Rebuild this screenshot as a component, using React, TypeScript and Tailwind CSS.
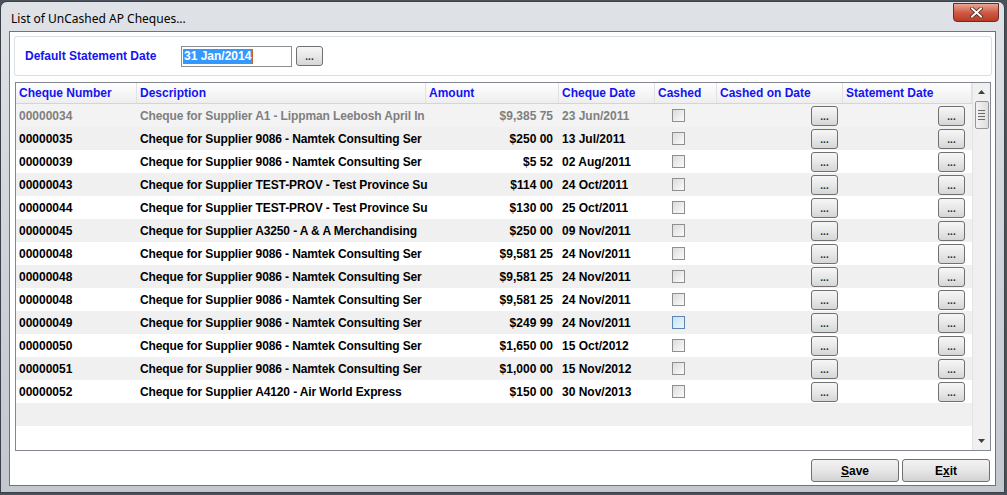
import React from "react";

type Row = {
  no: string;
  desc: string;
  amount: string;
  date: string;
  dim?: boolean;
  hover?: boolean;
};

const NAMTEK = "Cheque for Supplier 9086 - Namtek Consulting Ser";
const TESTPROV = "Cheque for Supplier TEST-PROV - Test Province Su";

const rows: Row[] = [
  { no: "00000034", desc: "Cheque for Supplier A1 - Lippman Leebosh April In", amount: "$9,385 75", date: "23 Jun/2011", dim: true },
  { no: "00000035", desc: NAMTEK, amount: "$250 00", date: "13 Jul/2011" },
  { no: "00000039", desc: NAMTEK, amount: "$5 52", date: "02 Aug/2011" },
  { no: "00000043", desc: TESTPROV, amount: "$114 00", date: "24 Oct/2011" },
  { no: "00000044", desc: TESTPROV, amount: "$130 00", date: "25 Oct/2011" },
  { no: "00000045", desc: "Cheque for Supplier A3250 - A & A Merchandising", amount: "$250 00", date: "09 Nov/2011" },
  { no: "00000048", desc: NAMTEK, amount: "$9,581 25", date: "24 Nov/2011" },
  { no: "00000048", desc: NAMTEK, amount: "$9,581 25", date: "24 Nov/2011" },
  { no: "00000048", desc: NAMTEK, amount: "$9,581 25", date: "24 Nov/2011" },
  { no: "00000049", desc: NAMTEK, amount: "$249 99", date: "24 Nov/2011", hover: true },
  { no: "00000050", desc: NAMTEK, amount: "$1,650 00", date: "15 Oct/2012" },
  { no: "00000051", desc: NAMTEK, amount: "$1,000 00", date: "15 Nov/2012" },
  { no: "00000052", desc: "Cheque for Supplier A4120 - Air World Express", amount: "$150 00", date: "30 Nov/2013" },
];

const font = { fontFamily: '"Liberation Sans", Arial, sans-serif' };

function DotsButton() {
  return (
    <div className="w-[27px] h-[20px] rounded-[3px] border border-[#707070] bg-gradient-to-b from-[#f6f6f6] via-[#e8e8e8] to-[#d6d6d6] flex items-end justify-center pb-[3px] text-[10px] leading-none font-bold text-[#1c2a40]">
      ...
    </div>
  );
}

function CheckBox({ hover }: { hover?: boolean }) {
  return hover ? (
    <div className="w-[13px] h-[13px] border border-[#5c86ad] bg-gradient-to-br from-[#c6e2f3] to-[#eaf6fd]" />
  ) : (
    <div className="w-[13px] h-[13px] border border-[#8e8f8f] bg-gradient-to-br from-[#dcdcdc] to-[#fbfbfb]" />
  );
}

const headers = [
  { label: "Cheque Number", w: "w-[121px]" },
  { label: "Description", w: "w-[289px]" },
  { label: "Amount", w: "w-[133px]" },
  { label: "Cheque Date", w: "w-[96px]" },
  { label: "Cashed", w: "w-[62px]" },
  { label: "Cashed on Date", w: "w-[126px]" },
  { label: "Statement Date", w: "w-[129px]" },
];

export default function App() {
  return (
    <div className="w-[1007px] h-[495px] bg-[#4b5158] overflow-hidden" style={font}>
      <div className="w-[1005px] h-[492px] mt-[1px] rounded-t-[7px] border border-[#3c4148] bg-gradient-to-b from-[#dfe3e8] via-[#cfd4da] to-[#c3c8ce] flex flex-col px-[8px] pb-[6px]">
        {/* title bar */}
        <div className="h-[29px] flex items-start justify-between">
          <div
            className="pt-[8px] pl-[2px] text-[12px] text-black"
            style={{ fontFamily: '"Noto Sans", "DejaVu Sans", sans-serif' }}
          >
            List of UnCashed AP Cheques...
          </div>
          <div className="mt-[1px] mr-[-3px] w-[46px] h-[19px] rounded-b-[4px] border border-[#6b2a22] bg-gradient-to-b from-[#e8a593] via-[#cf5a45] to-[#b93a26] flex items-center justify-center">
            <svg width="13" height="11" viewBox="0 0 13 11">
              <path d="M2 1.5 L11 9.5 M11 1.5 L2 9.5" stroke="#3a1a14" strokeWidth="3.4" strokeLinecap="square" />
              <path d="M2 1.5 L11 9.5 M11 1.5 L2 9.5" stroke="#ffffff" strokeWidth="2" strokeLinecap="square" />
            </svg>
          </div>
        </div>

        {/* client area */}
        <div className="flex-1 bg-white border border-[#6f747a] flex flex-col">
          {/* group box */}
          <div className="mt-[4px] ml-[4px] mr-[3px] h-[40px] rounded-[3px] border border-[#d5dfe5] flex items-center pl-[10px]">
            <div className="w-[156px] text-[12px] font-bold text-[#1414f0]">Default Statement Date</div>
            <div className="w-[111px] h-[21px] border border-[#8a8d92] flex items-center pl-[1px]">
              <span className="bg-[#3399ff] text-white text-[12px] font-bold px-[1px] leading-[15px]">31 Jan/2014</span>
              <span className="w-[1px] h-[15px] bg-[#c4662a]" />
            </div>
            <div className="ml-[4px]">
              <DotsButton />
            </div>
          </div>

          {/* grid */}
          <div className="mt-[6px] ml-[5px] mr-[4px] h-[369px] border border-[#828790] flex">
            <div className="w-[956px] flex flex-col">
              <div className="h-[21px] flex bg-gradient-to-b from-white to-[#eeeeee] border-b border-[#d5d5d5]">
                {headers.map((h) => (
                  <div
                    key={h.label}
                    className={`${h.w} border-r border-[#e2e2e2] pl-[3px] flex items-center text-[12px] font-bold text-[#1414f0]`}
                  >
                    {h.label}
                  </div>
                ))}
              </div>
              {rows.map((r, i) => (
                <div
                  key={i}
                  className={`h-[23px] flex items-center text-[12px] font-bold ${
                    i === 0 ? "bg-[#f3f3f3] text-[#7f7f7f]" : i % 2 === 1 ? "bg-[#f0f0f0] text-black" : "bg-white text-black"
                  }`}
                >
                  <div className="w-[121px] pl-[3px]">{r.no}</div>
                  <div className="w-[289px] pl-[3px] whitespace-nowrap tracking-[-0.12px]">{r.desc}</div>
                  <div className="w-[133px] pr-[6px] text-right">{r.amount}</div>
                  <div className="w-[96px] pl-[3px]">{r.date}</div>
                  <div className="w-[62px] pl-[17px]">
                    <CheckBox hover={r.hover} />
                  </div>
                  <div className="w-[126px] flex justify-end pr-[5px]">
                    <DotsButton />
                  </div>
                  <div className="w-[129px] flex justify-end pr-[7px]">
                    <DotsButton />
                  </div>
                </div>
              ))}
              <div className="h-[23px] bg-[#f0f0f0]" />
            </div>

            {/* scrollbar */}
            <div className="flex-1 bg-[#f0f0f0] border-l border-[#e3e3e3] flex flex-col items-center">
              <div className="h-[18px] flex items-center justify-center">
                <svg width="7" height="4" viewBox="0 0 7 4">
                  <path d="M0 4 L3.5 0 L7 4 Z" fill="#404040" />
                </svg>
              </div>
              <div className="w-[14px] h-[28px] rounded-[2px] border border-[#979797] bg-gradient-to-r from-[#f3f3f3] to-[#dedede] flex flex-col items-center justify-center gap-[2px]">
                <div className="w-[7px] h-[1px] bg-[#6a6a6a]" />
                <div className="w-[7px] h-[1px] bg-[#6a6a6a]" />
                <div className="w-[7px] h-[1px] bg-[#6a6a6a]" />
                <div className="w-[7px] h-[1px] bg-[#6a6a6a]" />
              </div>
              <div className="flex-1" />
              <div className="h-[18px] flex items-center justify-center">
                <svg width="7" height="4" viewBox="0 0 7 4">
                  <path d="M0 0 L7 0 L3.5 4 Z" fill="#404040" />
                </svg>
              </div>
            </div>
          </div>

          {/* buttons */}
          <div className="mt-[8px] flex justify-end gap-[3px] pr-[5px]">
            <button className="w-[88px] h-[23px] rounded-[3px] border border-[#707070] bg-gradient-to-b from-[#f2f2f2] via-[#e6e6e6] to-[#d2d2d2] text-[12px] font-bold text-black">
              <span className="underline">S</span>ave
            </button>
            <button className="w-[88px] h-[23px] rounded-[3px] border border-[#707070] bg-gradient-to-b from-[#f2f2f2] via-[#e6e6e6] to-[#d2d2d2] text-[12px] font-bold text-black">
              E<span className="underline">x</span>it
            </button>
          </div>
        </div>
      </div>
    </div>
  );
}
